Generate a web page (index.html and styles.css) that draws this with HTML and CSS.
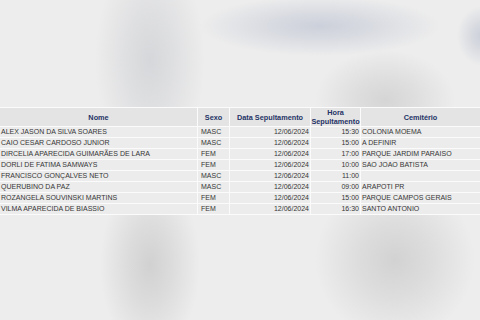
FILE: index.html
```html
<!DOCTYPE html>
<html lang="pt-BR">
<head>
<meta charset="utf-8">
<title>Sepultamentos</title>
<link rel="stylesheet" href="styles.css">
</head>
<body>
<main class="page">
  <table class="burials">
    <colgroup>
      <col class="c-name"><col class="c-sex"><col class="c-date"><col class="c-time"><col class="c-cem">
    </colgroup>
    <thead>
      <tr>
        <th>Nome</th>
        <th>Sexo</th>
        <th>Data Sepultamento</th>
        <th>Hora<br>Sepultamento</th>
        <th>Cemitério</th>
      </tr>
    </thead>
    <tbody>
      <tr><td>ALEX JASON DA SILVA SOARES</td><td class="sex">MASC</td><td class="num">12/06/2024</td><td class="num">15:30</td><td>COLONIA MOEMA</td></tr>
      <tr><td>CAIO CESAR CARDOSO JUNIOR</td><td class="sex">MASC</td><td class="num">12/06/2024</td><td class="num">15:00</td><td>A DEFINIR</td></tr>
      <tr><td>DIRCELIA APARECIDA GUIMARÃES DE LARA</td><td class="sex">FEM</td><td class="num">12/06/2024</td><td class="num">17:00</td><td>PARQUE JARDIM PARAISO</td></tr>
      <tr><td>DORLI DE FATIMA SAMWAYS</td><td class="sex">FEM</td><td class="num">12/06/2024</td><td class="num">10:00</td><td>SAO JOAO BATISTA</td></tr>
      <tr><td>FRANCISCO GONÇALVES NETO</td><td class="sex">MASC</td><td class="num">12/06/2024</td><td class="num">11:00</td><td></td></tr>
      <tr><td>QUERUBINO DA PAZ</td><td class="sex">MASC</td><td class="num">12/06/2024</td><td class="num">09:00</td><td>ARAPOTI PR</td></tr>
      <tr><td>ROZANGELA SOUVINSKI MARTINS</td><td class="sex">FEM</td><td class="num">12/06/2024</td><td class="num">15:00</td><td>PARQUE CAMPOS GERAIS</td></tr>
      <tr><td>VILMA APARECIDA DE BIASSIO</td><td class="sex">FEM</td><td class="num">12/06/2024</td><td class="num">16:30</td><td>SANTO ANTONIO</td></tr>
    </tbody>
  </table>
</main>
</body>
</html>
```

FILE: styles.css
```css
html, body {
  margin: 0;
  padding: 0;
}

body {
  width: 480px;
  height: 320px;
  overflow: hidden;
  font-family: "Liberation Sans", Arial, sans-serif;
  background-color: #ededed;
  background-image:
    radial-gradient(ellipse 55px 110px at 150px 60px, #d6d7da 0%, rgba(214,215,218,0.6) 45%, rgba(237,237,237,0) 100%),
    radial-gradient(ellipse 120px 30px at 320px 26px, #ccd0da 0%, rgba(204,208,218,0.6) 45%, rgba(237,237,237,0) 100%),
    radial-gradient(ellipse 70px 50px at 385px 100px, #d5d5d5 0%, rgba(213,213,213,0.6) 45%, rgba(237,237,237,0) 100%),
    radial-gradient(ellipse 25px 30px at 482px 36px, #cbcfd9 0%, rgba(203,207,217,0.6) 45%, rgba(237,237,237,0) 100%),
    radial-gradient(ellipse 50px 90px at 150px 265px, #d1d1d1 0%, rgba(209,209,209,0.6) 45%, rgba(237,237,237,0) 100%),
    radial-gradient(ellipse 80px 80px at 395px 260px, #d2d2d2 0%, rgba(210,210,210,0.6) 45%, rgba(237,237,237,0) 100%);
}

.page {
  padding-top: 107px;
}

.burials {
  margin-left: -1px;
  width: 482px;
  table-layout: fixed;
  border-collapse: separate;
  border-spacing: 1px;
  background: #fbfbfb;
  color: #363636;
  font-size: 7px;
}

.c-name { width: 197px; }
.c-sex { width: 31px; }
.c-date { width: 80px; }
.c-time { width: 49px; }
.c-cem { width: 119px; }

.burials th {
  height: 18px;
  padding: 0;
  background: #e4e4e4;
  color: #243366;
  font-size: 7.3px;
  font-weight: bold;
  line-height: 9px;
  text-align: center;
  vertical-align: middle;
}

.burials td {
  height: 10px;
  padding: 0 1px;
  background: #ececec;
  line-height: 10px;
  white-space: nowrap;
  overflow: hidden;
}

.burials td.sex {
  padding-left: 3px;
}

.burials td.num {
  text-align: right;
  padding-right: 1px;
}
```
